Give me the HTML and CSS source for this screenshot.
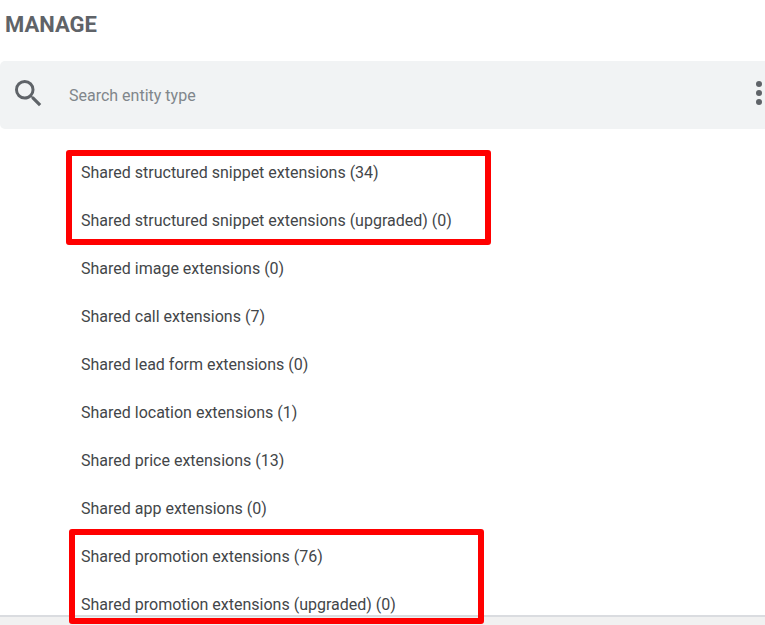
FILE: index.html
```html
<!DOCTYPE html>
<html lang="en">
<head>
    <meta charset="UTF-8">
    <meta name="viewport" content="width=device-width, initial-scale=1.0">
    <title>Manage</title>
    <link rel="stylesheet" href="styles.css">
</head>
<body>
    <h1>MANAGE</h1>

    <!-- Search bar -->
    <form class="search-bar">
        <svg class="search-icon" viewBox="0 0 18 18" aria-hidden="true">
            <path d="M12.5 11h-.79l-.28-.27A6.47 6.47 0 0 0 13 6.5 6.5 6.5 0 1 0 6.5 13c1.61 0 3.09-.59 4.23-1.57l.27.28v.79l5 4.99L17.49 16l-4.99-5zm-6 0C4.01 11 2 8.99 2 6.5S4.01 2 6.5 2 11 4.01 11 6.5 8.99 11 6.5 11z"/>
        </svg>
        <input type="text" id="entity-search" aria-label="Search entity type" placeholder="Search entity type">
        <button type="button" class="menu-btn" aria-label="More options">
            <svg viewBox="0 0 6 24" aria-hidden="true">
                <circle cx="3" cy="3" r="3"/>
                <circle cx="3" cy="12" r="3"/>
                <circle cx="3" cy="21" r="3"/>
            </svg>
        </button>
    </form>

    <!-- Entity list -->
    <main class="entity-list">
        <ul class="highlight">
            <li>Shared structured snippet extensions (34)</li>
            <li>Shared structured snippet extensions (upgraded) (0)</li>
        </ul>
        <ul>
            <li>Shared image extensions (0)</li>
            <li>Shared call extensions (7)</li>
            <li>Shared lead form extensions (0)</li>
            <li>Shared location extensions (1)</li>
            <li>Shared price extensions (13)</li>
            <li>Shared app extensions (0)</li>
        </ul>
        <ul class="highlight highlight-promo">
            <li>Shared promotion extensions (76)</li>
            <li>Shared promotion extensions (upgraded) (0)</li>
        </ul>
    </main>

    <footer></footer>
</body>
</html>
```
FILE: styles.css
```css
*,
*::before {
    box-sizing: border-box;
}

body {
    font-family: Roboto, sans-serif;
    font-size: 16px;
    color: #434649;
    background-color: white;
    margin: 0;
    min-height: 100vh;
    display: flex;
    flex-direction: column;
}

h1 {
    margin: 0;
    padding: 9px 5px 20px;
    font-size: 22px;
    line-height: 32px;
    font-weight: 700;
    color: #5f6368;
}

/* Search bar */
.search-bar {
    display: flex;
    align-items: center;
    height: 68px;
    padding: 0 3px 0 15px;
    border-radius: 5px 0 0 5px;
    background-color: #f1f3f4;
}

.search-icon {
    width: 27px;
    height: 27px;
    margin-bottom: 4px;
    fill: #5f6368;
}

.search-bar input {
    flex: 1;
    min-width: 0;
    margin-left: 27px;
    padding: 0;
    border: none;
    outline: none;
    background: none;
    font: inherit;
    color: #434649;
}

.search-bar input::placeholder {
    color: #80868b;
    opacity: 1;
}

.menu-btn {
    display: flex;
    padding: 0;
    margin-bottom: 4px;
    border: none;
    background: none;
    cursor: pointer;
}

.menu-btn svg {
    width: 6px;
    height: 24px;
    fill: #5f6368;
}

/* Entity list */
.entity-list {
    padding: 20px 66px 0;
}

ul {
    list-style: none;
    margin: 0;
    padding: 0 15px;
}

li {
    line-height: 48px;
}

/* Red frame round a group of rows */
.highlight {
    position: relative;
}

.highlight::before {
    content: "";
    position: absolute;
    top: 1px;
    left: 0;
    width: 425px;
    height: 95px;
    border: 6px solid #ff0000;
    border-radius: 3px;
}

.highlight-promo::before {
    top: -4px;
    left: 3px;
    width: 415px;
}

footer {
    flex: 1;
    margin-top: -14px;
    border-top: 2px solid #dadce0;
    background-color: #f1f1f1;
}
```
